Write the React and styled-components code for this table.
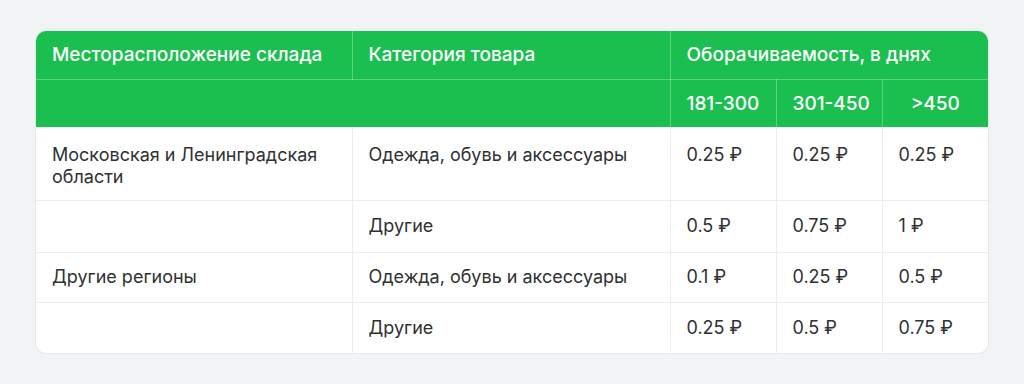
import React from "react";
import styled, { createGlobalStyle } from "styled-components";

const GlobalStyle = createGlobalStyle`
  html, body {
    margin: 0;
    padding: 0;
    background: #f2f3f5;
    font-family: Inter, "Noto Sans", sans-serif;
  }
`;

const Page = styled.div`
  width: 1024px;
  height: 384px;
  box-sizing: border-box;
  padding: 31px 36px 0 36px;
`;

const Card = styled.div`
  width: 952px;
  border-radius: 10px;
  overflow: hidden;
  background: #ffffff;
  box-shadow: 0 0 0 1px #e6e9ee;
`;

const Table = styled.table`
  width: 100%;
  border-collapse: collapse;
  table-layout: fixed;
`;

const Head = styled.th`
  background: #1bbf50;
  color: #ffffff;
  font-weight: 500;
  font-size: 19px;
  text-align: ${({ $center }) => ($center ? "center" : "left")};
  padding: 0 ${({ $center }) => ($center ? "6px" : "16px")};
  height: 48px;
  box-sizing: border-box;
  white-space: nowrap;
  border-right: 1px solid rgba(255, 255, 255, 0.28);
  border-bottom: 1px solid rgba(255, 255, 255, 0.28);
  &:last-child {
    border-right: none;
  }
`;

const Cell = styled.td`
  color: #2f3133;
  font-size: 18px;
  line-height: 22px;
  padding: 0 16px;
  height: ${({ $h }) => $h}px;
  vertical-align: ${({ $top }) => ($top ? "top" : "middle")};
  padding-top: ${({ $top }) => ($top ? "16px" : "0")};
  box-sizing: border-box;
  white-space: ${({ $wrap }) => ($wrap ? "normal" : "nowrap")};
  border-right: 1px solid #e9edf1;
  border-bottom: 1px solid #e9edf1;
  &:last-child {
    border-right: none;
  }
  tr:last-child > & {
    border-bottom: none;
  }
`;

const rows = [
  { place: "Московская и Ленинградская области", cat: "Одежда, обувь и аксессуары", v: ["0.25 ₽", "0.25 ₽", "0.25 ₽"], h: 73, top: true },
  { place: "", cat: "Другие", v: ["0.5 ₽", "0.75 ₽", "1 ₽"], h: 52 },
  { place: "Другие регионы", cat: "Одежда, обувь и аксессуары", v: ["0.1 ₽", "0.25 ₽", "0.5 ₽"], h: 50 },
  { place: "", cat: "Другие", v: ["0.25 ₽", "0.5 ₽", "0.75 ₽"], h: 51 },
];

export default function App() {
  return (
    <Page>
      <GlobalStyle />
      <Card>
        <Table>
          <colgroup>
            <col style={{ width: 316 }} />
            <col style={{ width: 318 }} />
            <col style={{ width: 106 }} />
            <col style={{ width: 106 }} />
            <col style={{ width: 106 }} />
          </colgroup>
          <thead>
            <tr>
              <Head>Месторасположение склада</Head>
              <Head>Категория товара</Head>
              <Head colSpan={3}>Оборачиваемость, в днях</Head>
            </tr>
            <tr>
              <Head colSpan={2}></Head>
              <Head>181-300</Head>
              <Head>301-450</Head>
              <Head $center>&gt;450</Head>
            </tr>
          </thead>
          <tbody>
            {rows.map((r, i) => (
              <tr key={i}>
                <Cell $h={r.h} $top={r.top} $wrap>{r.place}</Cell>
                <Cell $h={r.h} $top={r.top}>{r.cat}</Cell>
                {r.v.map((x, j) => (
                  <Cell key={j} $h={r.h} $top={r.top}>{x}</Cell>
                ))}
              </tr>
            ))}
          </tbody>
        </Table>
      </Card>
    </Page>
  );
}
